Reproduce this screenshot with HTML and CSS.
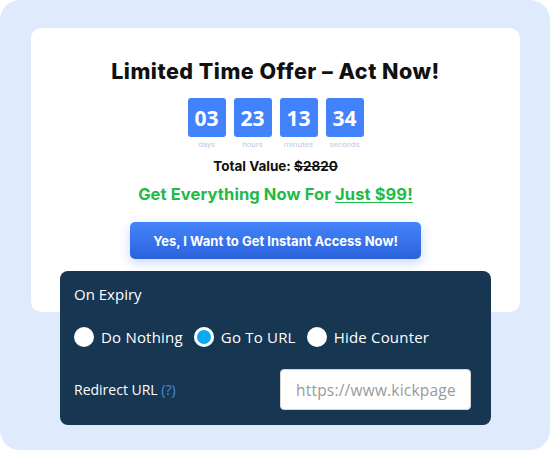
FILE: index.html
```html
<!DOCTYPE html>
<html>
<head>
<meta charset="utf-8">
<link rel="stylesheet" href="styles.css">
</head>
<body>
<div class="frame">
  <div class="card">
    <h1 class="title">Limited Time Offer – Act Now!</h1>
    <div class="timer">
      <div class="unit"><div class="box">03</div><div class="lbl">days</div></div>
      <div class="unit"><div class="box">23</div><div class="lbl">hours</div></div>
      <div class="unit"><div class="box">13</div><div class="lbl">minutes</div></div>
      <div class="unit"><div class="box">34</div><div class="lbl">seconds</div></div>
    </div>
    <div class="total">Total Value: <s>$2820</s></div>
    <div class="offer">Get Everything Now For <u>Just $99!</u></div>
    <div class="btn-row"><button class="cta">Yes, I Want to Get Instant Access Now!</button></div>
  </div>
  <div class="panel">
    <div class="p-title">On Expiry</div>
    <div class="radios">
      <label class="radio"><span class="dot"></span>Do Nothing</label>
      <label class="radio"><span class="dot on"></span>Go To URL</label>
      <label class="radio"><span class="dot"></span>Hide Counter</label>
    </div>
    <div class="redirect">
      <div class="r-label">Redirect URL <span class="help">(?)</span></div>
      <div class="input"><span class="ph">https://www.kickpage</span></div>
    </div>
  </div>
</div>
</body>
</html>
```
FILE: styles.css
```css
* { box-sizing: border-box; }
html, body { margin: 0; padding: 0; background: #ffffff; }
.frame {
  width: 550px; height: 450px;
  background: #dfebfd;
  border-radius: 20px;
  padding: 28px 30px 0 31px;
  overflow: hidden;
}
.card {
  background: #ffffff;
  border-radius: 10px;
  height: 284px;
  padding-top: 30px;
  display: flex; flex-direction: column; align-items: center;
}
.title {
  margin: 0;
  font-family: "Inter", sans-serif;
  font-weight: 800;
  font-size: 21.5px;
  line-height: 26px;
  color: #111111;
  letter-spacing: 0.5px;
}
.timer {
  display: flex; gap: 8px;
  margin-top: 14px;
}
.unit { display: flex; flex-direction: column; align-items: center; }
.box {
  width: 38px; height: 39px;
  background: #4282fb;
  border-radius: 3px;
  color: #fff;
  font-family: "Open Sans", sans-serif;
  font-weight: 700;
  font-size: 21px;
  display: flex; align-items: center; justify-content: center;
}
.lbl {
  font-family: "Roboto", sans-serif;
  font-size: 8px;
  color: #c2cadc;
  margin-top: 3px;
  line-height: 10px;
}
.total {
  margin-top: 8px;
  font-family: "Inter", sans-serif;
  font-weight: 700;
  font-size: 13.5px;
  line-height: 16px;
  color: #111;
}
.offer {
  margin-top: 10px;
  font-family: "Inter", sans-serif;
  font-weight: 700;
  font-size: 16.5px;
  line-height: 20px;
  letter-spacing: 0.1px;
  color: #1fba48;
}
.offer u { text-underline-offset: 2px; }
.btn-row { margin-top: 18px; }
.cta {
  width: 291px; height: 37px;
  border: 0; border-radius: 5px;
  background: linear-gradient(#4585fb, #2b62dc);
  box-shadow: 0 4px 12px rgba(64, 120, 240, 0.28);
  color: #fff;
  font-family: "Inter", sans-serif;
  font-weight: 700;
  font-size: 13px;
  padding: 0;
}
.panel {
  margin-top: -41px;
  margin-left: 29px;
  width: 431px; height: 154px;
  background: #173652;
  border-radius: 8px;
  padding: 0 20px 0 14px;
  display: flex; flex-direction: column;
  font-family: "Open Sans", sans-serif;
  color: #ffffff;
}
.p-title {
  height: 46px;
  display: flex; align-items: center;
  font-size: 15px;
}
.radios {
  height: 40px;
  display: flex; align-items: center;
  gap: 11px;
  font-size: 15px;
  letter-spacing: 0.2px;
}
.radio { display: flex; align-items: center; gap: 7px; }
.dot {
  width: 20px; height: 20px;
  border-radius: 50%;
  background: #fff;
}
.dot.on {
  background: #0aa9f0;
  box-shadow: inset 0 0 0 3px #fff;
}
.redirect {
  margin-top: 12px;
  height: 41px;
  display: flex; align-items: center; justify-content: space-between;
}
.r-label { font-size: 14px; }
.help { color: #3d8fe0; }
.input {
  width: 191px; height: 41px;
  background: #fff;
  border: 1px solid #d6d6d6;
  border-radius: 4px;
  padding-left: 15px;
  overflow: hidden;
  white-space: nowrap;
  display: flex; align-items: center;
}
.ph { color: #9a9a9a; font-size: 15.5px; letter-spacing: 0.2px; }
```
